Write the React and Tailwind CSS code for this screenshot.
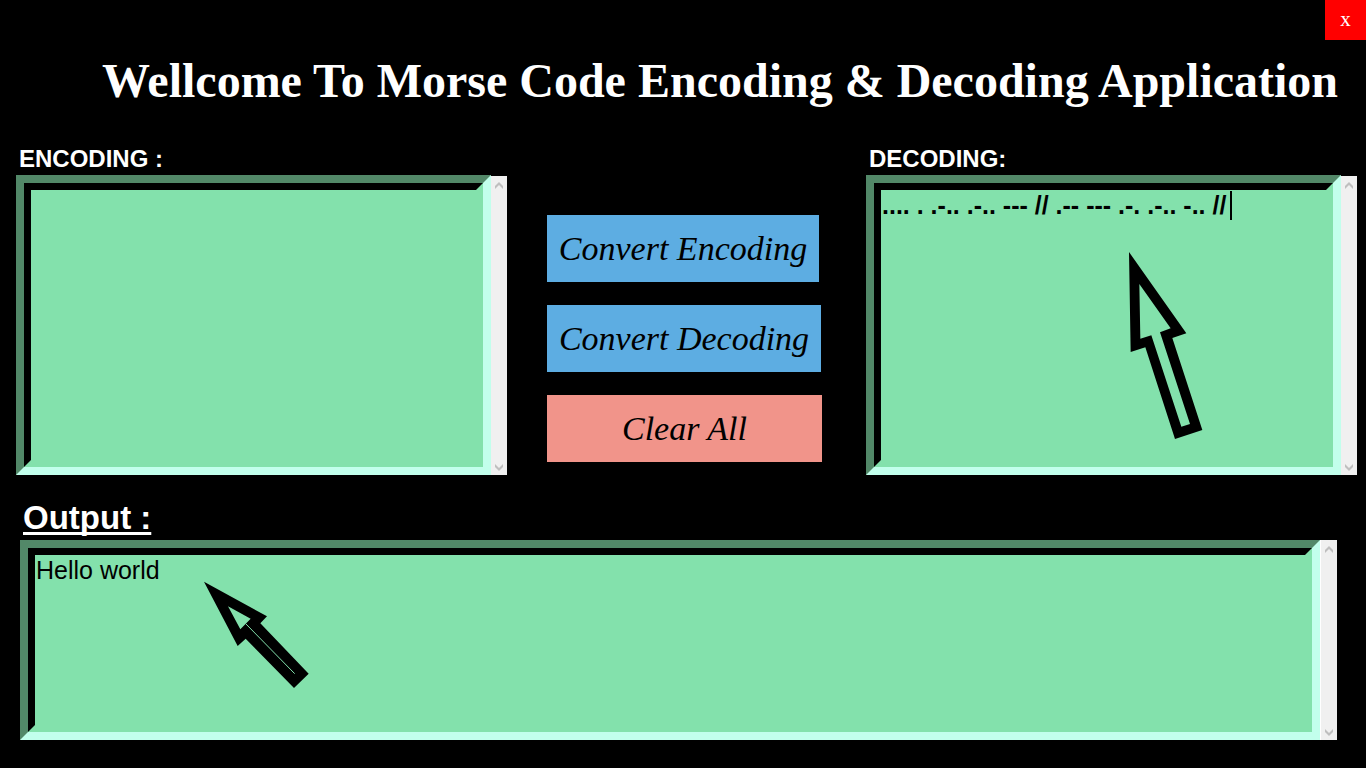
import { useState } from "react";

function ScrollBar({ className }) {
  return (
    <div aria-hidden="true" className={`flex w-4 shrink-0 flex-col items-center justify-between bg-[#f0f0f0] pt-1.5 pb-1 ${className}`}>
      <svg width="8" height="7" viewBox="0 0 8 7" className="block" fill="#bfbfbf">
        <path d="M0 4 4 0 8 4V7L4 3 0 7Z" />
      </svg>
      <svg width="8" height="7" viewBox="0 0 8 7" className="block" fill="#bfbfbf">
        <path d="M0 0 4 4 8 0V3L4 7 0 3Z" />
      </svg>
    </div>
  );
}

function TextPanel({ id, value, onChange, height, weight, gap, scrollClass, children }) {
  return (
    <div className={`flex ${height} ${gap}`}>
      <div className="relative flex min-w-0 flex-1 border-8 border-t-[#528868] border-r-[#c2ffec] border-b-[#c2ffec] border-l-[#528868] bg-black">
        <textarea
          id={id}
          value={value}
          onChange={(e) => onChange(e.target.value)}
          spellCheck={false}
          className={`block w-full flex-1 resize-none overflow-hidden rounded-none border-[7px] border-t-black border-r-[#83e1ac] border-b-[#83e1ac] border-l-black bg-[#83e1ac] p-px text-[25px] leading-[29px] text-black outline-none ${weight}`}
        />
        {children}
      </div>
      <ScrollBar className={scrollClass} />
    </div>
  );
}

const buttonClass = "h-[67px] cursor-pointer font-['Liberation_Serif',serif] text-[34px] leading-10 italic text-black";

export default function App() {
  const [plain, setPlain] = useState("");
  const [morse, setMorse] = useState(".... . .-.. .-.. --- // .-- --- .-. .-.. -.. // ");
  const [output, setOutput] = useState("Hello world");

  const clearAll = () => {
    setPlain("");
    setMorse("");
    setOutput("");
  };

  return (
    <div className="min-h-screen bg-black pb-7 font-['Liberation_Sans',sans-serif] text-white">
      <header>
        <div className="flex justify-end">
          <button type="button" aria-label="Close" className="h-10 w-[41px] bg-[#ff0000] pb-0.5 font-['Liberation_Serif',serif] text-[21px] leading-6">
            x
          </button>
        </div>
        <h1 className="mt-3.5 pl-[102px] font-['Liberation_Serif',serif] text-5xl leading-[54px] font-bold whitespace-nowrap">
          Wellcome To Morse Code Encoding &amp; Decoding Application
        </h1>
      </header>

      <main className="mt-[37px]">
        <div className="flex pr-[9px] pl-4">
          <section className="min-w-0 flex-1">
            <label htmlFor="encoding" className="mb-0.5 block pl-[3px] text-2xl leading-7 font-bold">
              ENCODING :
            </label>
            <TextPanel id="encoding" value={plain} onChange={setPlain} height="h-[300px]" weight="font-bold" gap="gap-0" scrollClass="mt-px" />
          </section>

          <div className="mr-11 ml-10 flex w-[275px] shrink-0 flex-col items-start gap-[23px] pt-[70px]">
            <button type="button" className={`${buttonClass} w-[272px] bg-[#5dade2]`}>
              Convert Encoding
            </button>
            <button type="button" className={`${buttonClass} w-[274px] bg-[#5dade2]`}>
              Convert Decoding
            </button>
            <button type="button" onClick={clearAll} className={`${buttonClass} w-[275px] bg-[#f1948a]`}>
              Clear All
            </button>
          </div>

          <section className="min-w-0 flex-1">
            <label htmlFor="decoding" className="mb-0.5 block pl-[3px] text-2xl leading-7 font-bold">
              DECODING:
            </label>
            <TextPanel id="decoding" value={morse} onChange={setMorse} height="h-[300px]" weight="font-bold" gap="gap-0" scrollClass="mt-px">
              <span aria-hidden="true" className="pointer-events-none absolute top-2 left-[356px] h-[29px] w-0.5 bg-black" />
              <svg aria-hidden="true" viewBox="0 0 360 630" className="pointer-events-none absolute top-[57px] left-[236px] h-[210px] w-[120px]">
                <path
                  fillRule="evenodd"
                  d="M57 36 229 280 187 294 277 570 195 597 106 322 62 336ZM88 132 182 265 150 277 240 552 214 560 124 286 91 296Z"
                />
              </svg>
            </TextPanel>
          </section>
        </div>

        <section className="mt-6 mr-[29px] ml-5">
          <label htmlFor="output" className="mb-[3px] ml-[3px] block w-fit text-[33px] leading-[38px] font-bold underline decoration-[3px] underline-offset-[3px] [text-decoration-skip-ink:none]">
            Output :
          </label>
          <TextPanel id="output" value={output} onChange={setOutput} height="h-[200px]" weight="font-normal" gap="gap-px bg-white" scrollClass="mt-0">
            <svg aria-hidden="true" viewBox="0 0 390 390" className="pointer-events-none absolute top-[22px] left-[162px] size-[130px]">
              <path fillRule="evenodd" d="M42 35 231 139 211 160 356 311 312 354 167 206 143 228ZM114 109 182 146 151 178Z" />
              <path d="M167 161 314 311" stroke="#83e1ac" strokeWidth="3" />
            </svg>
          </TextPanel>
        </section>
      </main>
    </div>
  );
}
